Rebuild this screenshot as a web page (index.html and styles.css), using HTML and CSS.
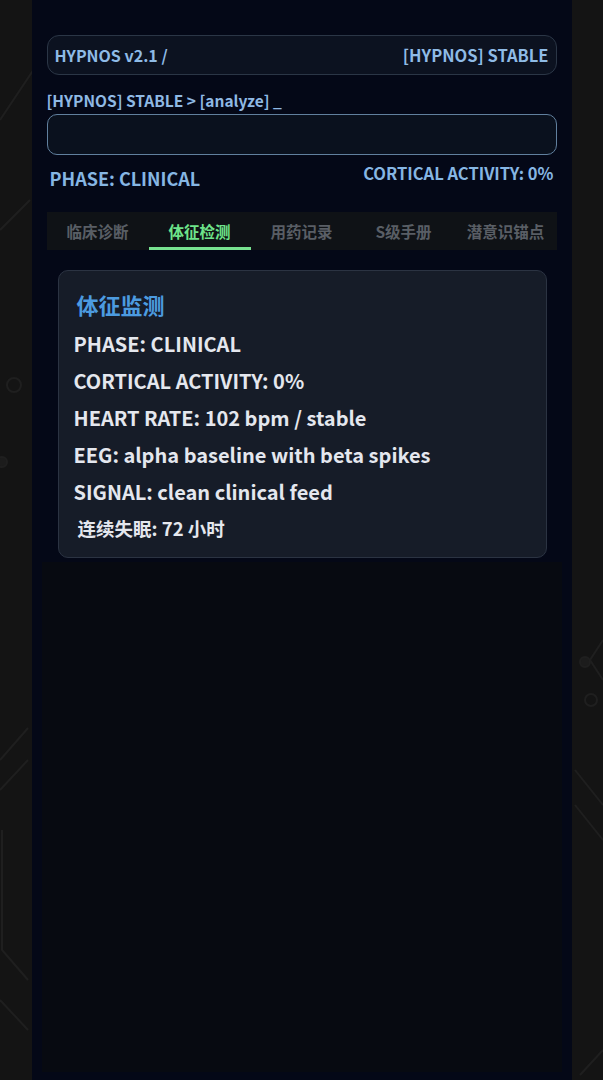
FILE: index.html
```html
<!DOCTYPE html>
<html lang="zh">
<head>
    <meta charset="UTF-8">
    <meta name="viewport" content="width=device-width, initial-scale=1.0">
    <title>HYPNOS</title>
    <link rel="stylesheet" href="styles.css">
</head>
<body>
    <!-- faint circuit lines behind the terminal -->
    <svg class="circuit" width="603" height="1080" viewBox="0 0 603 1080">
        <g fill="none" stroke="#1f1f1f" stroke-width="2">
            <path d="M0 120 L40 60"/>
            <path d="M0 230 L20 210 L30 200"/>
            <circle cx="14" cy="385" r="7"/>
            <circle cx="2" cy="462" r="5" fill="#1c1c1c"/>
            <path d="M0 760 L28 728"/>
            <path d="M0 790 L28 760"/>
            <path d="M2 830 L2 950 L28 980"/>
            <path d="M0 1000 L28 1030"/>
            <path d="M603 640 L590 660 L603 680"/>
            <circle cx="591" cy="700" r="6"/>
            <circle cx="585" cy="662" r="5" fill="#1c1c1c"/>
            <path d="M575 770 L603 805"/>
            <path d="M575 805 L603 840"/>
            <path d="M580 1075 L603 1050"/>
        </g>
    </svg>

    <main class="terminal">
        <header class="topbar">
            <span>HYPNOS v2.1 /</span>
            <span class="state">[HYPNOS] STABLE</span>
        </header>

        <div class="prompt">[HYPNOS] STABLE &gt; [analyze] _</div>
        <div class="cmd-input"></div>

        <div class="status-row">
            <span class="phase">PHASE: CLINICAL</span>
            <span class="cortical">CORTICAL ACTIVITY: 0%</span>
        </div>

        <nav class="tabs">
            <div class="tab">临床诊断</div>
            <div class="tab active">体征检测</div>
            <div class="tab">用药记录</div>
            <div class="tab">S级手册</div>
            <div class="tab">潜意识锚点</div>
        </nav>

        <section class="card">
            <h2 class="card-title">体征监测</h2>
            <p>PHASE: CLINICAL</p>
            <p>CORTICAL ACTIVITY: 0%</p>
            <p>HEART RATE: 102 bpm / stable</p>
            <p>EEG: alpha baseline with beta spikes</p>
            <p>SIGNAL: clean clinical feed</p>
            <p class="cn">连续失眠: 72 小时</p>
        </section>

        <div class="log-area"></div>
    </main>
</body>
</html>
```

FILE: styles.css
```css
html, body {
    margin: 0;
    padding: 0;
    height: 100%;
    background: #141414;
    font-family: "Noto Sans CJK SC", "Noto Sans", sans-serif;
    overflow: hidden;
}
.circuit {
    position: absolute;
    top: 0;
    left: 0;
    z-index: 0;
}
.terminal {
    position: relative;
    z-index: 1;
    width: 540px;
    height: 1080px;
    margin: 0 auto;
    background: #040817;
    box-sizing: border-box;
    padding: 35px 15px 8px 15px;
    display: flex;
    flex-direction: column;
}
.topbar {
    display: flex;
    justify-content: space-between;
    align-items: center;
    height: 38px;
    padding: 0 7px;
    border: 1px solid #2b3646;
    border-radius: 12px;
    background: #0c1220;
    color: #8fbbe6;
    font-size: 16px;
    font-weight: 700;
}
.topbar .state {
    font-size: 16.5px;
}
.prompt {
    margin-top: 14px;
    color: #8fb9e4;
    font-size: 15.5px;
    font-weight: 700;
    line-height: 22px;
}
.cmd-input {
    margin-top: 3px;
    height: 39px;
    border: 1.5px solid #61809e;
    border-radius: 10px;
    background: #0a111e;
}
.status-row {
    display: flex;
    justify-content: space-between;
    align-items: flex-start;
    padding: 0 3px;
    margin-top: 6px;
    font-weight: 700;
    color: #86b6e3;
    line-height: 24px;
}
.phase {
    font-size: 18px;
    margin-top: 5px;
}
.cortical {
    font-size: 16.5px;
}
.tabs {
    display: flex;
    margin-top: 22px;
    height: 38px;
    background: #0f1216;
}
.tab {
    flex: 1;
    display: flex;
    align-items: center;
    justify-content: center;
    white-space: nowrap;
    color: #595e65;
    font-size: 15.5px;
    font-weight: 700;
    box-sizing: border-box;
    border-bottom: 3px solid transparent;
    padding-top: 2px;
}
.tab.active {
    color: #6ee48a;
    border-bottom-color: #78e290;
}
.card {
    margin: 20px 10px 0 11px;
    padding: 18px 16px 10px 15px;
    background: #161c28;
    border: 1px solid #2b3342;
    border-radius: 10px;
}
.card-title {
    margin: 0 0 6px 3px;
    color: #4c9be0;
    font-size: 22px;
    font-weight: 700;
    line-height: 30px;
}
.card p {
    margin: 0;
    color: #e4e7ee;
    font-size: 20px;
    font-weight: 700;
    line-height: 37px;
}
.card p.cn {
    margin-left: 4px;
    font-size: 18.5px;
}
.log-area {
    flex: 1;
    margin: 4px -5px 0 -5px;
    background: #070a11;
}
```
